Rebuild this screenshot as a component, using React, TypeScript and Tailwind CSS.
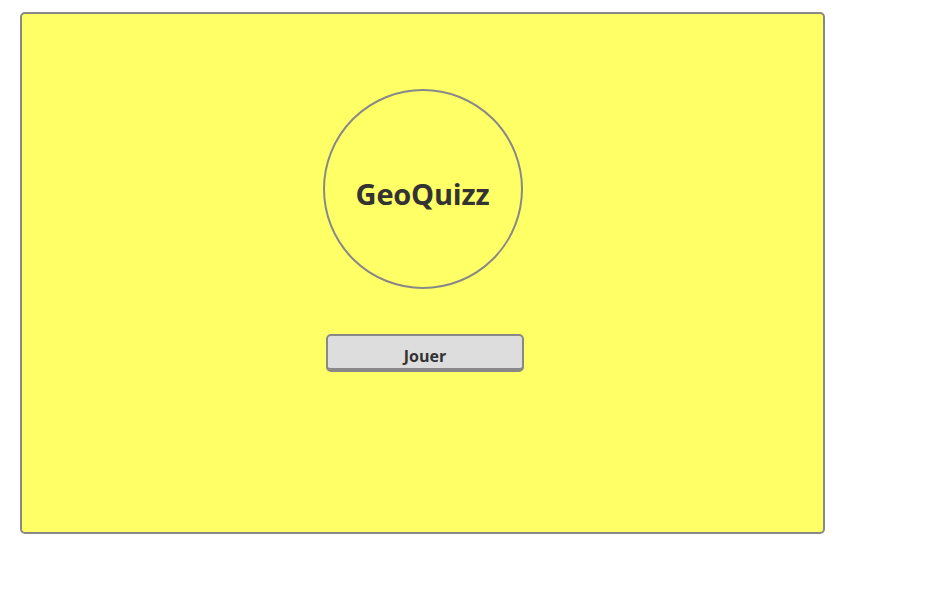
export default function App() {
  return (
    <div className="min-h-[600px] bg-white pl-5 pt-3" style={{ fontFamily: '"Open Sans", "Liberation Sans", sans-serif' }}>
      <div className="flex h-[522px] w-[805px] flex-col items-center rounded-[5px] border-2 border-[#888] bg-[#ffff66]">
        <div className="mt-[75px] flex h-[200px] w-[200px] items-center justify-center rounded-full border-2 border-[#888]">
          <span className="mt-[10px] text-[29px] font-bold tracking-[-0.2px] text-[#333]">GeoQuizz</span>
        </div>
        <button
          type="button"
          className="ml-[5px] mt-[45px] flex h-[38px] w-[198px] items-end justify-center rounded-[5px] border-2 border-b-4 border-[#888] bg-[#dddddd] pb-[1px] text-[16px] font-bold leading-[22px] text-[#333]"
        >
          Jouer
        </button>
      </div>
    </div>
  );
}
